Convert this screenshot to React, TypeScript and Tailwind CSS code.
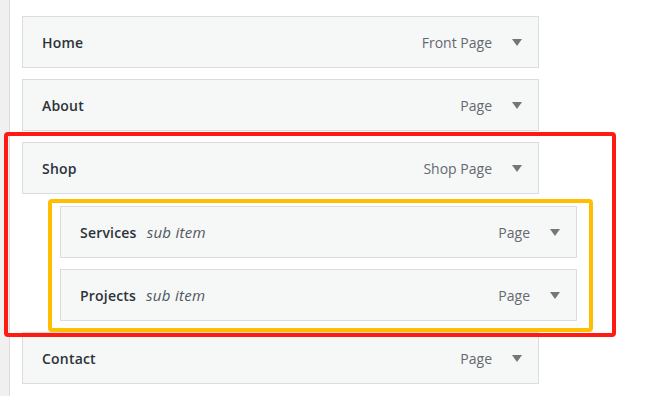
const Arrow = () => (
  <svg width="10" height="7" viewBox="0 0 10 7" className="shrink-0">
    <path d="M0 0 H10 L5 7 Z" fill="#72777c" />
  </svg>
);

type ItemProps = {
  title: string;
  type: string;
  sub?: boolean;
  first?: boolean;
};

const MenuItem = ({ title, type, sub, first }: ItemProps) => {
  return (
    <div
      className={`flex items-center h-[52px] w-[517px] bg-[#f6f7f7] border border-[#dcdcde] pl-[19px] pr-[16px] ${
        sub ? "ml-[38px]" : ""
      } ${first ? "mt-[1px]" : ""}`}
    >
      <span className="text-[14px] font-semibold tracking-[0.2px] text-[#2c3338]">{title}</span>
      {sub && (
        <span className="ml-[10px] text-[15px] tracking-[0.3px] italic text-[#50575e]">
          sub item
        </span>
      )}
      <span className="ml-auto text-[14px] text-[#646970]">{type}</span>
      <span className="ml-[20px] flex items-center">
        <Arrow />
      </span>
    </div>
  );
};

const App = () => {
  return (
    <div
      className="flex w-[672px] h-[396px] bg-white overflow-hidden"
      style={{ fontFamily: '"Open Sans", "Noto Sans", sans-serif' }}
    >
      <div className="w-[10px] h-full bg-[#f0f0f1] border-r border-[#dcdcde]" />
      <div className="relative flex-1 pl-[12px] pt-[16px]">
        <div className="flex flex-col gap-[11px]">
          <MenuItem title="Home" type="Front Page" />
          <MenuItem title="About" type="Page" />
          <MenuItem title="Shop" type="Shop Page" />
          <MenuItem title="Services" type="Page" sub first />
          <MenuItem title="Projects" type="Page" sub />
          <MenuItem title="Contact" type="Page" />
        </div>

        {/* highlight frames */}
        <div className="absolute left-[-6px] top-[132px] w-[612px] h-[205px] border-[4px] border-[#ff1a12] rounded-[4px] pointer-events-none" />
        <div className="absolute left-[38px] top-[199px] w-[545px] h-[133px] border-[4px] border-[#ffbf00] rounded-[4px] pointer-events-none" />
      </div>
    </div>
  );
};

export default App;
